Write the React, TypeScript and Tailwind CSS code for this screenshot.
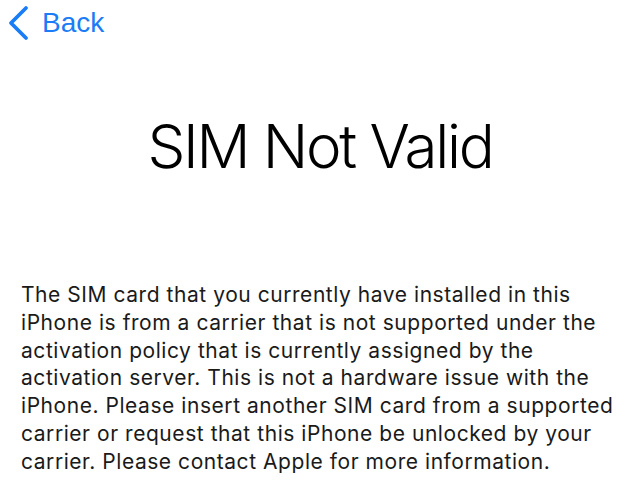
export default function App() {
  const lines = [
    "The SIM card that you currently have installed in this",
    "iPhone is from a carrier that is not supported under the",
    "activation policy that is currently assigned by the",
    "activation server. This is not a hardware issue with the",
    "iPhone. Please insert another SIM card from a supported",
    "carrier or request that this iPhone be unlocked by your",
    "carrier. Please contact Apple for more information.",
  ];
  return (
    <div
      className="w-[640px] h-[496px] bg-white overflow-hidden"
      style={{ fontFamily: '"Liberation Sans", Arial, sans-serif' }}
    >
      <div className="flex items-center h-[46px] pl-[7px] text-[#1a7cf6]">
        <svg width="22" height="36" viewBox="0 0 22 36" fill="none">
          <path d="M19 3 L4 18 L19 33" stroke="#1a7cf6" strokeWidth="3.8" strokeLinecap="round" strokeLinejoin="round" />
        </svg>
        <span className="ml-[13px] text-[28px] leading-none">Back</span>
      </div>
      <h1
        className="mt-[70px] text-center text-[60px] font-light leading-none text-black tracking-[-2.3px]"
        style={{ fontFamily: 'Inter, "Liberation Sans", sans-serif' }}
      >
        SIM Not Valid
      </h1>
      <div
        className="mt-[105px] pl-[21px] text-[21px] leading-[27.8px] tracking-[0.55px] text-[#1a1a1a]"
        style={{ fontFamily: 'Inter, "Liberation Sans", sans-serif' }}
      >
        {lines.map((l, i) => (
          <div key={i} className="whitespace-nowrap">{l}</div>
        ))}
      </div>
    </div>
  );
}
